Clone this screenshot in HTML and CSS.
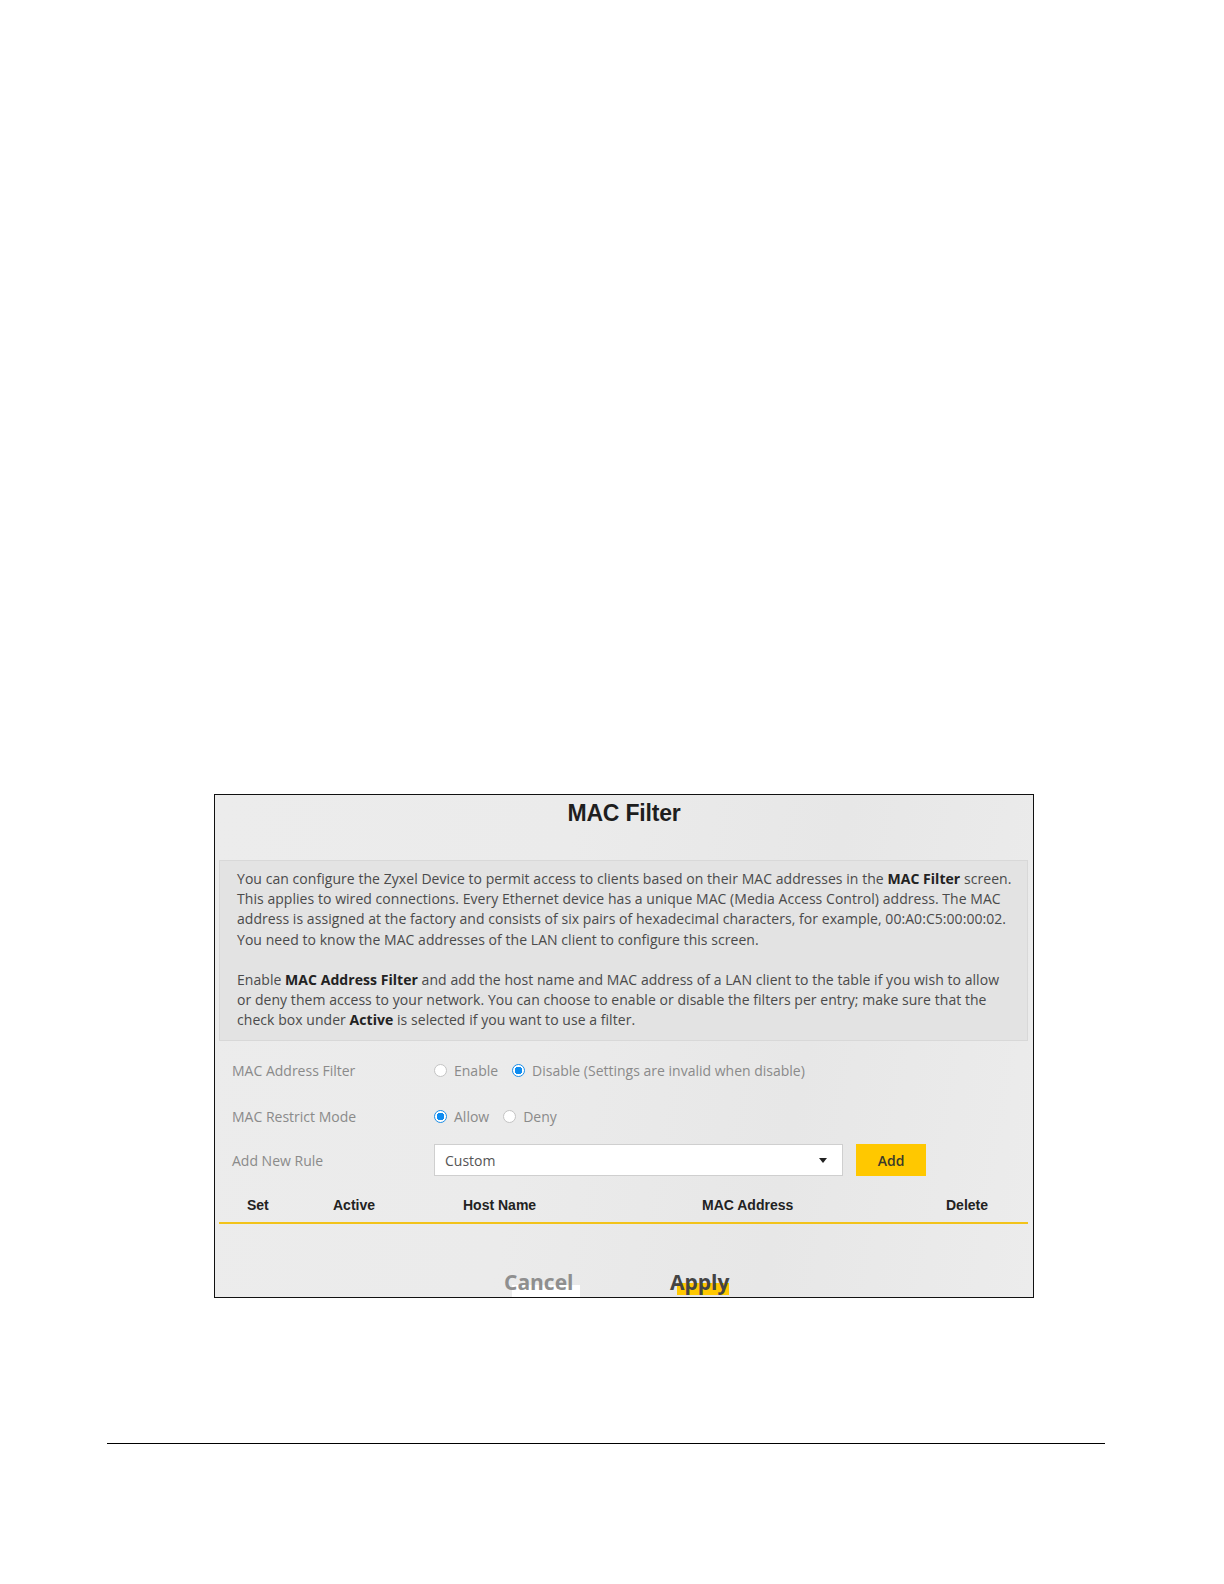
FILE: index.html
```html
<!DOCTYPE html>
<html>
<head>
<meta charset="utf-8">
<link rel="stylesheet" href="styles.css">
</head>
<body>
<div class="page">
  <div class="panel">
    <h1 class="title">MAC Filter</h1>
    <div class="info">
      <p>You can configure the Zyxel Device to permit access to clients based on their MAC addresses in the <b>MAC Filter</b> screen. This applies to wired connections. Every Ethernet device has a unique MAC (Media Access Control) address. The MAC address is assigned at the factory and consists of six pairs of hexadecimal characters, for example, 00:A0:C5:00:00:02. You need to know the MAC addresses of the LAN client to configure this screen.</p>
      <p>Enable <b>MAC Address Filter</b> and add the host name and MAC address of a LAN client to the table if you wish to allow or deny them access to your network. You can choose to enable or disable the filters per entry; make sure that the check box under <b>Active</b> is selected if you want to use a filter.</p>
    </div>
    <div class="form">
      <div class="row r1">
        <div class="label">MAC Address Filter</div>
        <div class="value">
          <span class="radio"></span><span class="opt">Enable</span>
          <span class="radio on"></span><span class="opt">Disable (Settings are invalid when disable)</span>
        </div>
      </div>
      <div class="row r2">
        <div class="label">MAC Restrict Mode</div>
        <div class="value">
          <span class="radio on"></span><span class="opt">Allow</span>
          <span class="radio"></span><span class="opt">Deny</span>
        </div>
      </div>
      <div class="row r3">
        <div class="label">Add New Rule</div>
        <div class="value">
          <div class="select"><span>Custom</span><span class="caret"></span></div>
          <div class="add">Add</div>
        </div>
      </div>
    </div>
    <div class="thead">
      <div class="th c1">Set</div>
      <div class="th c2">Active</div>
      <div class="th c3">Host Name</div>
      <div class="th c4">MAC Address</div>
      <div class="th c5">Delete</div>
    </div>
    <div class="actions">
      <div class="btn cancel">Cancel</div>
      <div class="btn apply">Apply</div>
    </div>
  </div>
  <div class="footer-line"></div>
</div>
</body>
</html>
```

FILE: styles.css
```css
html, body {
  margin: 0;
  padding: 0;
  background: #fff;
}
.page {
  padding-top: 794px;
}
.panel {
  margin-left: 214px;
  width: 820px;
  height: 504px;
  box-sizing: border-box;
  border: 1px solid #111;
  overflow: hidden;
  background: linear-gradient(100deg, #ececec 0%, #ebebeb 40%, #e7e7e7 70%, #ececec 100%);
  font-family: "Open Sans", "DejaVu Sans", sans-serif;
}
.title {
  margin: 0;
  height: 65px;
  padding-top: 3px;
  box-sizing: border-box;
  text-align: center;
  font-family: "Liberation Sans", Arial, sans-serif;
  font-weight: bold;
  font-size: 23px;
  line-height: 30px;
  color: #1e1e1e;
  letter-spacing: -0.2px;
}
.info {
  margin: 0 5px 0 4px;
  border: 1px solid #d8d8d8;
  background: #e3e3e3;
  padding: 8px 12px 8px 17px;
  height: 181px;
  box-sizing: border-box;
  color: #4a4a4a;
  font-size: 14px;
  line-height: 20.2px;
  letter-spacing: 0.05px;
}
.info p {
  margin: 0 0 20.2px 0;
}
.info p:last-child { margin-bottom: 0; }
.info b { color: #222; }
.form {
  padding-left: 17px;
  color: #8a8a8a;
  font-size: 14px;
}
.row {
  display: flex;
  align-items: center;
}
.r1 { height: 58px; }
.r2 { height: 34px; }
.r3 { height: 54px; }
.label {
  width: 202px;
  flex: none;
}
.value {
  display: flex;
  align-items: center;
}
.radio {
  width: 13px;
  height: 13px;
  border: 1px solid #c4c4c4;
  border-radius: 50%;
  background: #fff;
  box-sizing: border-box;
  margin-right: 7px;
}
.radio.on {
  border: 1px solid #1a8ee8;
  background: radial-gradient(circle, #0f8cf0 0 3.6px, #fff 4px);
}
.opt { margin-right: 14px; }
.select {
  width: 409px;
  height: 32px;
  box-sizing: border-box;
  background: #fff;
  border: 1px solid #cfcfcf;
  display: flex;
  align-items: center;
  justify-content: space-between;
  padding: 0 15px 0 10px;
  color: #555;
}
.caret {
  width: 0;
  height: 0;
  border-left: 4px solid transparent;
  border-right: 4px solid transparent;
  border-top: 5px solid #222;
}
.add {
  margin-left: 13px;
  width: 70px;
  height: 32px;
  background: #ffc800;
  color: #3a3a2a;
  font-weight: 600;
  display: flex;
  align-items: center;
  justify-content: center;
  font-size: 14px;
}
.thead {
  margin: 0 5px 0 4px;
  height: 37px;
  border-bottom: 2px solid #f2c31a;
  display: flex;
  align-items: center;
  font-family: "Liberation Sans", Arial, sans-serif;
  font-weight: bold;
  font-size: 14px;
  color: #222;
  box-sizing: border-box;
  padding-top: 1px;
}
.c1 { margin-left: 28px; width: 86px; }
.c2 { width: 130px; }
.c3 { width: 239px; }
.c4 { width: 244px; }
.actions {
  display: flex;
  padding-left: 289px;
  padding-top: 44px;
}
.btn {
  font-size: 21px;
  font-weight: bold;
  line-height: 28px;
  height: 30px;
}
.cancel {
  color: #8f8f8f;
  width: 166px;
  background: linear-gradient(#fff, #fff) no-repeat 8px 17px / 68px 14px;
}
.apply {
  color: #444;
  background: linear-gradient(#ffc800, #ffc800) no-repeat 7px 15px / 56px 12px;
}
.footer-line {
  margin-top: 145px;
  margin-left: 107px;
  width: 998px;
  height: 1px;
  background: #000;
}
```
